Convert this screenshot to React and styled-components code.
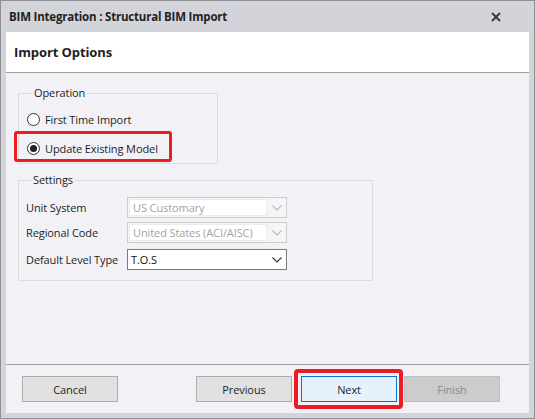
import styled, { createGlobalStyle } from "styled-components";

const GlobalStyle = createGlobalStyle`
  * { box-sizing: border-box; }
  body {
    margin: 0;
    font-family: "Segoe UI", "Open Sans", "Noto Sans", sans-serif;
    font-size: 11px;
    letter-spacing: -0.1px;
    color: #1e1e1e;
  }
`;

const Window = styled.div`
  width: 535px;
  height: 419px;
  display: flex;
  flex-direction: column;
  background: #d3d4d9;
  border: 1px solid #8e8f94;
  padding: 0 5px 5px 5px;
`;

const TitleBar = styled.div`
  height: 31px;
  display: flex;
  align-items: center;
  justify-content: space-between;
  padding: 0 28px 0 3px;
  font-weight: 700;
  font-size: 11.5px;
  color: #222;
  letter-spacing: -0.2px;
`;

const Body = styled.div`
  flex: 1;
  display: flex;
  flex-direction: column;
  background: #f1f1f6;
`;

const Header = styled.div`
  height: 41px;
  background: #fff;
  border-bottom: 1px solid #a0a0a0;
  display: flex;
  align-items: center;
  padding-left: 8px;
  font-weight: 700;
  font-size: 13px;
  letter-spacing: -0.1px;
  color: #1e1e1e;
`;

const Content = styled.div`
  flex: 1;
  padding: 12px 0 0 12px;
`;

const Group = styled.fieldset`
  margin: 0 0 8px 0;
  width: ${(p) => p.$width}px;
  border: 1px solid #dcdcdc;
  padding: ${(p) => p.$padding};
  min-width: 0;
`;

const Legend = styled.legend`
  padding: 0 2px;
  margin-left: 5px;
  line-height: 16px;
`;

const RadioRow = styled.label`
  height: 29px;
  display: flex;
  align-items: center;
  gap: 5px;
  position: relative;
  ${(p) =>
    p.$highlight &&
    `
    &::after {
      content: "";
      position: absolute;
      left: -13px;
      width: 152px;
      top: -3px;
      bottom: 1px;
      border: 3px solid #ed1c24;
      border-radius: 3px;
    }
  `}
`;

const RadioCircle = styled.span`
  width: 13px;
  height: 13px;
  border-radius: 50%;
  border: 1px solid #333;
  background: #fff;
  display: flex;
  align-items: center;
  justify-content: center;
  &::before {
    content: "";
    width: 7px;
    height: 7px;
    border-radius: 50%;
    background: ${(p) => (p.$checked ? "#222" : "transparent")};
  }
`;

const FieldRow = styled.div`
  display: flex;
  align-items: center;
  margin-top: ${(p) => p.$gap}px;
`;

const FieldLabel = styled.span`
  width: 101px;
  white-space: nowrap;
`;

const Combo = styled.div`
  width: 160px;
  height: 21px;
  display: flex;
  align-items: stretch;
  border: 1px solid ${(p) => (p.$disabled ? "#cccccc" : "#7a7a7a")};
  background: ${(p) => (p.$disabled ? "#f5f5f8" : "#fff")};
  color: ${(p) => (p.$disabled ? "#a2a2a2" : "#111")};
`;

const ComboText = styled.span`
  flex: 1;
  display: flex;
  align-items: center;
  padding-left: 3px;
  white-space: nowrap;
  ${(p) => p.$disabled && `margin: 1px 0 1px 1px; border: 1px solid #ececef; background: #fff;`}
`;

const ComboArrow = styled.span`
  width: 19px;
  display: flex;
  align-items: center;
  justify-content: center;
`;

const Footer = styled.div`
  border-top: 1px solid #a0a0a0;
  height: 49px;
  display: flex;
  align-items: center;
  padding: 0 29px 0 16px;
`;

const Button = styled.div`
  width: 96px;
  height: 26px;
  display: flex;
  align-items: center;
  justify-content: center;
  margin-left: ${(p) => p.$ml || 0}px;
  border: 1px solid ${(p) => (p.$primary ? "#0078d7" : p.$disabled ? "#bfbfbf" : "#adadad")};
  background: ${(p) => (p.$primary ? "#e5f1fb" : p.$disabled ? "#cccccc" : "#e1e1e1")};
  color: ${(p) => (p.$disabled ? "#8a8a8a" : "#1e1e1e")};
  position: relative;
  ${(p) =>
    p.$highlight &&
    `
    &::after {
      content: "";
      position: absolute;
      left: -8px;
      right: -7px;
      top: -8px;
      bottom: -8px;
      border: 4px solid #ed1c24;
      border-radius: 4px;
    }
  `}
`;

function Chevron({ color }) {
  return (
    <svg width="10" height="6" viewBox="0 0 10 6">
      <path d="M0.5 0.5 L5 5 L9.5 0.5" fill="none" stroke={color} strokeWidth="1.1" />
    </svg>
  );
}

function CloseIcon() {
  return (
    <svg width="10" height="10" viewBox="0 0 10 10">
      <path d="M1 1 L9 9 M9 1 L1 9" stroke="#333" strokeWidth="1.8" />
    </svg>
  );
}

const fields = [
  { label: "Unit System", value: "US Customary", disabled: true, gap: 0 },
  { label: "Regional Code", value: "United States (ACI/AISC)", disabled: true, gap: 4 },
  { label: "Default Level Type", value: "T.O.S", disabled: false, gap: 6 },
];

export default function App() {
  return (
    <>
      <GlobalStyle />
      <Window>
        <TitleBar>
          <span>BIM Integration : Structural BIM Import</span>
          <CloseIcon />
        </TitleBar>
        <Body>
          <Header>Import Options</Header>
          <Content>
            <Group $width={200} $padding="4px 8px 0 8px">
              <Legend>Operation</Legend>
              <RadioRow>
                <RadioCircle />
                First Time Import
              </RadioRow>
              <RadioRow $highlight>
                <RadioCircle $checked />
                Update Existing Model
              </RadioRow>
            </Group>
            <Group $width={355} $padding="9px 7px 10px 7px">
              <Legend>Settings</Legend>
              {fields.map((f) => (
                <FieldRow key={f.label} $gap={f.gap}>
                  <FieldLabel>{f.label}</FieldLabel>
                  <Combo $disabled={f.disabled}>
                    <ComboText $disabled={f.disabled}>{f.value}</ComboText>
                    <ComboArrow>
                      <Chevron color={f.disabled ? "#b8b8b8" : "#333"} />
                    </ComboArrow>
                  </Combo>
                </FieldRow>
              ))}
            </Group>
          </Content>
          <Footer>
            <Button>Cancel</Button>
            <Button $ml={78}>Previous</Button>
            <Button $ml={9} $primary $highlight>
              Next
            </Button>
            <Button $ml={7} $disabled>
              Finish
            </Button>
          </Footer>
        </Body>
      </Window>
    </>
  );
}
